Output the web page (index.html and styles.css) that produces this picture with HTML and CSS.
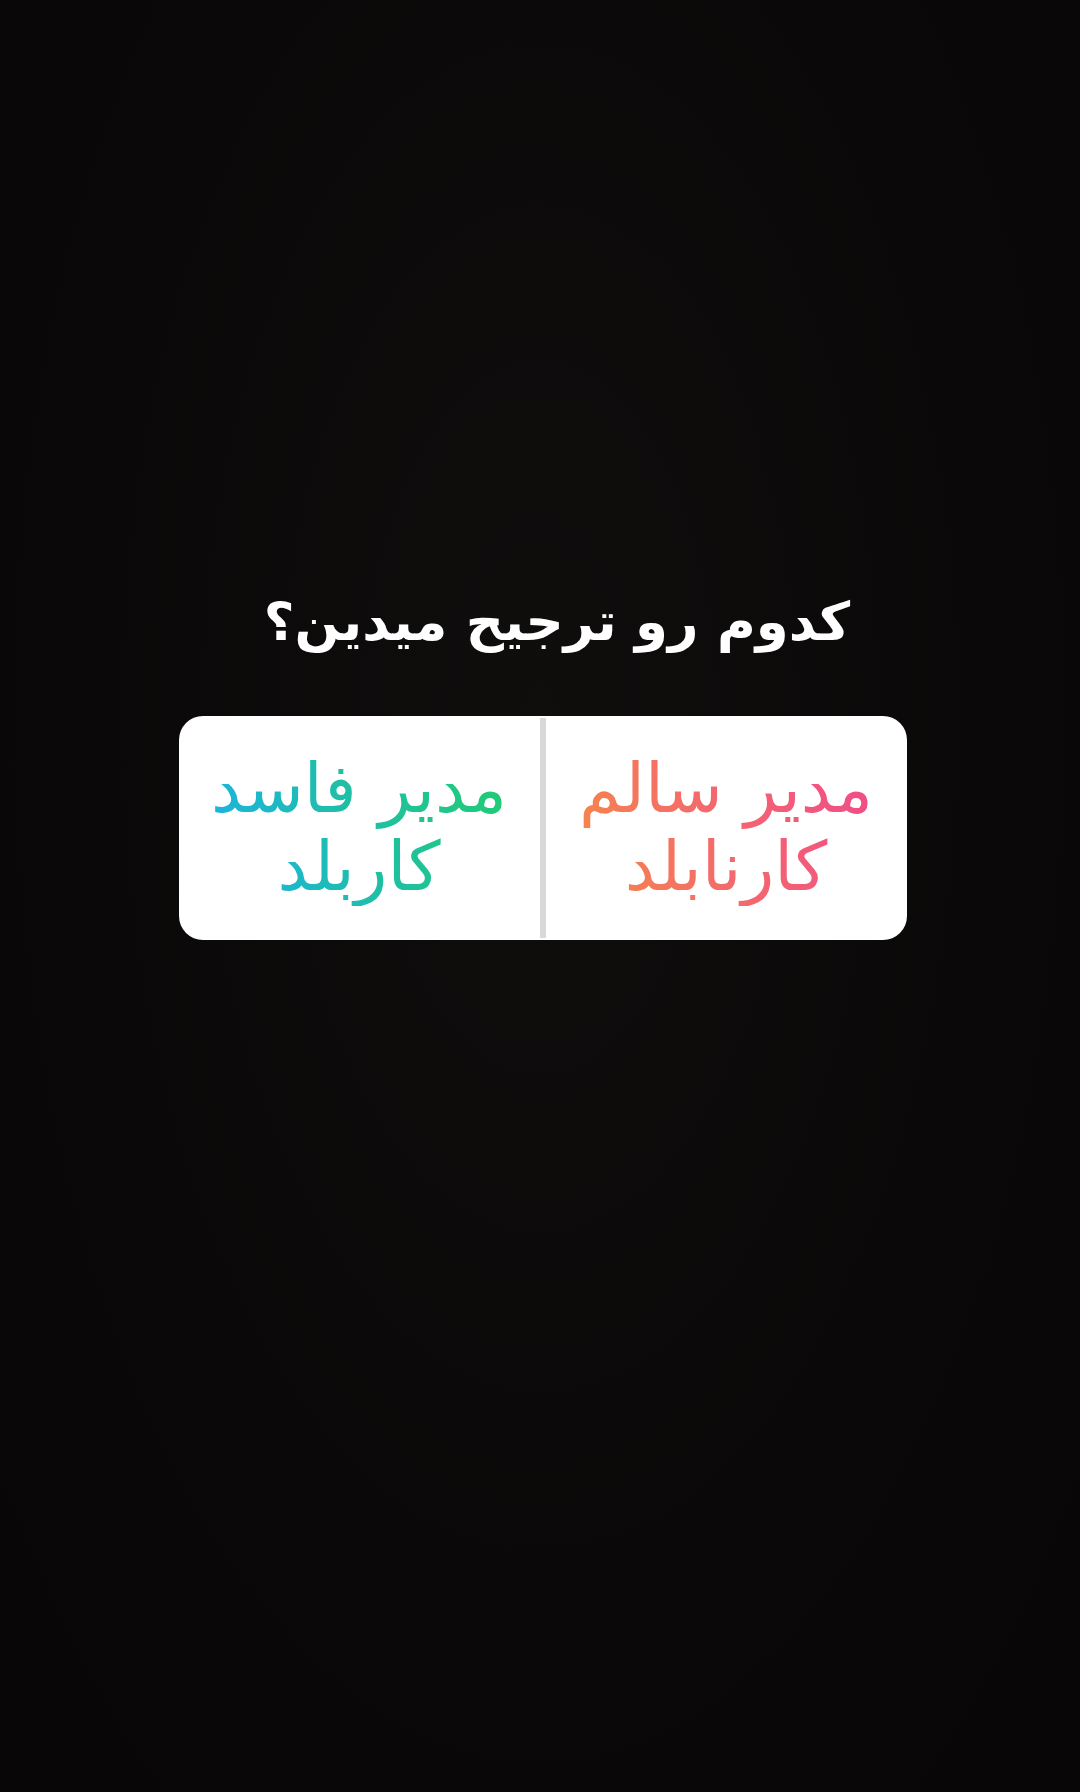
FILE: index.html
```html
<!DOCTYPE html>
<html lang="fa" dir="rtl">
<head>
<meta charset="utf-8">
<link rel="stylesheet" href="styles.css">
</head>
<body>
<main class="story">
  <h1 class="question">کدوم رو ترجیح میدین؟</h1>
  <div class="poll">
    <div class="option">
      <span class="label label-warm">مدیر سالم<br>کارنابلد</span>
    </div>
    <div class="divider"></div>
    <div class="option">
      <span class="label label-cool">مدیر فاسد<br>کاربلد</span>
    </div>
  </div>
</main>
</body>
</html>
```

FILE: styles.css
```css
html, body {
  margin: 0;
  padding: 0;
  background: #0b0909;
}
.story {
  width: 1080px;
  height: 1792px;
  box-sizing: border-box;
  padding-top: 582px;
  display: flex;
  flex-direction: column;
  align-items: center;
  background: radial-gradient(ellipse at 50% 40%, #100d0d 0%, #0a0808 60%, #080606 100%);
  font-family: "DejaVu Sans", sans-serif;
}
.question {
  margin: 0 0 0 34px;
  color: #ffffff;
  font-size: 53px;
  font-weight: bold;
  line-height: 80px;
  text-align: center;
}
.poll {
  margin-top: 54px;
  margin-left: 5px;
  width: 728px;
  height: 224px;
  background: #ffffff;
  border-radius: 24px;
  display: flex;
  flex-direction: row;
  overflow: hidden;
}
.option {
  flex: 1;
  display: flex;
  align-items: center;
  justify-content: center;
}
.divider {
  width: 6px;
  margin: 2px 0;
  background: #d9d9d9;
}
.label {
  display: inline-block;
  font-size: 68px;
  line-height: 78px;
  text-align: center;
  color: transparent;
  -webkit-background-clip: text;
  background-clip: text;
}
.label-warm {
  background-image: linear-gradient(250deg, #f04a8a 0%, #f3676f 50%, #f68a46 100%);
}
.label-cool {
  background-image: linear-gradient(250deg, #22cc70 0%, #1fbfa5 50%, #1bb1ec 100%);
}
```
